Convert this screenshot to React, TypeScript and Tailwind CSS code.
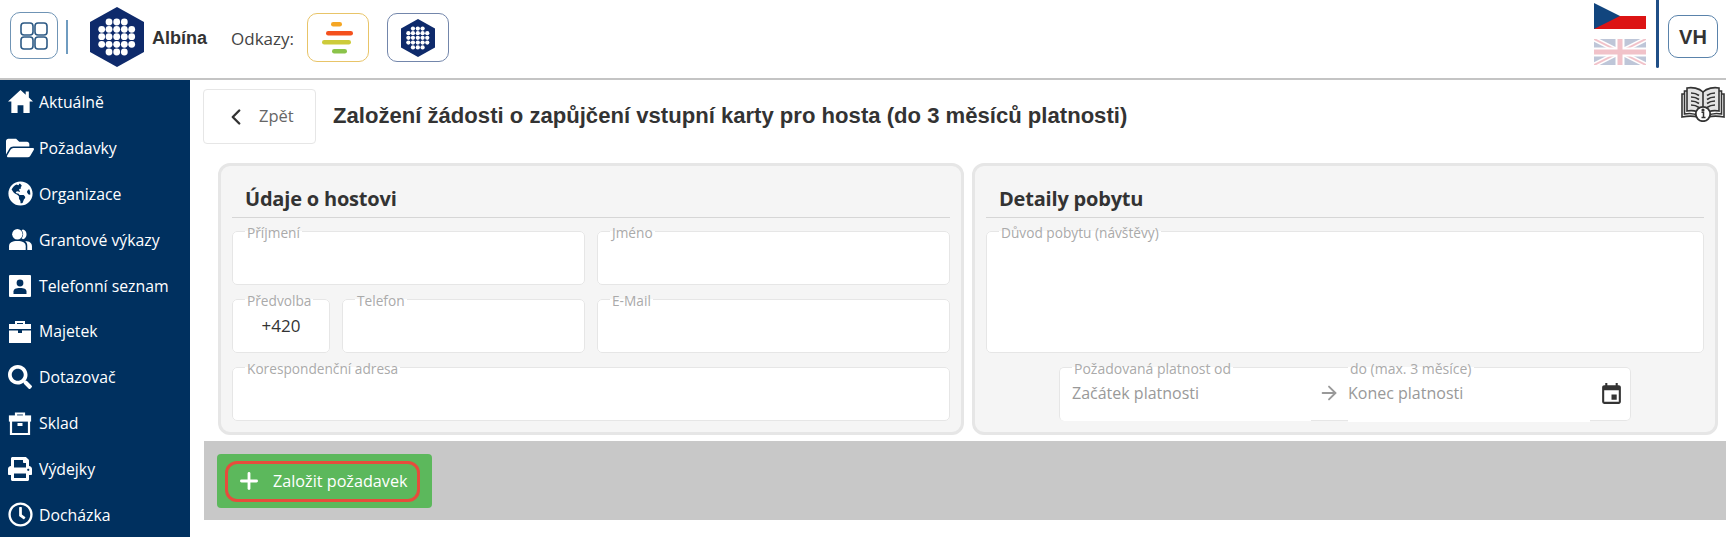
import type { ReactNode } from 'react'
import { ArrowRight, ChevronLeft, Plus } from 'lucide-react'
import { FaFolderOpen, FaGlobeAmericas, FaPrint, FaRegClock, FaSearch } from 'react-icons/fa'
import { MdEvent } from 'react-icons/md'

function LogoHex({ className }: { className: string }) {
  const rows = [
    [19, 26.7, 34.3],
    [11.7, 19, 26.7, 34.3, 41.7],
    [11.7, 19, 26.7, 34.3, 41.7],
    [11.7, 19, 26.7, 34.3, 41.7],
    [19, 26.7, 34.3],
  ]
  const ys = [15, 22.3, 29.7, 37.3, 45]
  return (
    <svg viewBox="0 0 54 60" className={className}>
      <polygon points="27,0 54,15 54,45 27,60 0,45 0,15" fill="#0e2a6b" />
      {rows.map((row, i) =>
        row.map((x) => <circle key={`${i}-${x}`} cx={x} cy={ys[i]} r="3.4" fill="#fff" />),
      )}
    </svg>
  )
}

function HomeIcon() {
  return (
    <svg viewBox="0 0 24 22" className="w-[25px] h-[23px]" fill="#fff">
      <path d="M12 0l5 4.500V1.500h3v5.700l4 3.800h-3.200v11h-6v-7.500h-5.600V22h-6V11H0z" />
    </svg>
  )
}

function UsersIcon() {
  return (
    <svg viewBox="0 0 24 24" className="w-[25px] h-[25px]" fill="#fff">
      <circle cx="9" cy="7" r="5" />
      <path d="M1 22v-3.500C1 15 4 13.500 9 13.500s8 1.500 8 5V22z" />
      <path d="M14.500 2.300a5 5 0 0 1 0 9.400c-.7-.3-1-.5-1.400-.7a6.500 6.500 0 0 0 0-8c.4-.3.8-.5 1.400-.7z" />
      <path d="M16.500 13.500c4 .2 6.500 1.800 6.500 5V22h-4.500v-4c0-1.800-.8-3.300-2-4.500z" />
    </svg>
  )
}

function ContactIcon() {
  return (
    <svg viewBox="0 0 22 22" className="w-[22px] h-[22px]">
      <rect width="22" height="22" rx="1" fill="#fff" />
      <circle cx="11" cy="8" r="3.4" fill="#00305f" />
      <path d="M4.5 19v-2.5c0-2.4 2.4-3.5 6.5-3.5s6.5 1.1 6.5 3.5V19z" fill="#00305f" />
    </svg>
  )
}

function AssetIcon() {
  return (
    <svg viewBox="0 0 24 24" className="w-[24px] h-[24px]" fill="#fff">
      <path d="M7 5V2h10v3h-2V4H9v1z" />
      <rect x="1" y="5" width="22" height="5" />
      <path d="M1 11.5h9V14h4v-2.5h9V24H1z" />
    </svg>
  )
}

function StockIcon() {
  return (
    <svg viewBox="0 0 24 24" className="w-[24px] h-[24px]" fill="none" stroke="#fff" strokeWidth="2.2">
      <path d="M8 5V2.5h8V5" />
      <rect x="2" y="5.5" width="20" height="4" fill="#fff" />
      <path d="M3 10v13h18V10" />
      <rect x="9.5" y="12" width="5" height="3" fill="#fff" strokeWidth="0" />
    </svg>
  )
}

function BookInfoIcon() {
  return (
    <svg viewBox="0 0 44 37" className="w-[44px] h-[37px]" fill="none" stroke="#333" strokeWidth="1.6">
      <path d="M22 7C18 3 11 2 6 3v23c5-1 11 0 16 4 5-4 11-5 16-4V3c-5-1-12 0-16 4z" fill="#e4e4e4" />
      <path d="M22 7v23" />
      <path d="M6 6H3.5v23c5-1 11 0 14 2M38 6h2.5v23c-5-1-11 0-14 2M3.5 9H1v23c5-1 12-1 16 0M40.500 9H43v23c-5-1-12-1-16 0" />
      <path d="M10 8c3 0 6 1 8 2.500M10 12c3 0 6 1 8 2.500M10 16c3 0 6 1 8 2.500M10 20c3 0 6 1 8 2.500M34 8c-3 0-6 1-8 2.500M34 12c-3 0-6 1-8 2.500M34 16c-3 0-6 1-8 2.500M34 20c-3 0-6 1-8 2.500" />
      <circle cx="22" cy="29" r="7.200" fill="#fff" strokeWidth="1.800" />
      <path d="M20.500 27.200h2v5M20.500 32.500h4" strokeWidth="1.500" />
      <circle cx="22" cy="25" r="0.800" fill="#333" />
    </svg>
  )
}

const menu: { label: string; icon: ReactNode }[] = [
  { label: 'Aktuálně', icon: <HomeIcon /> },
  { label: 'Požadavky', icon: <FaFolderOpen size={28} /> },
  { label: 'Organizace', icon: <FaGlobeAmericas size={25} /> },
  { label: 'Grantové výkazy', icon: <UsersIcon /> },
  { label: 'Telefonní seznam', icon: <ContactIcon /> },
  { label: 'Majetek', icon: <AssetIcon /> },
  { label: 'Dotazovač', icon: <FaSearch size={24} /> },
  { label: 'Sklad', icon: <StockIcon /> },
  { label: 'Výdejky', icon: <FaPrint size={24} /> },
  { label: 'Docházka', icon: <FaRegClock size={25} /> },
]

function Field({ label, className, children }: { label: string; className: string; children?: ReactNode }) {
  return (
    <fieldset className={`rounded-[5px] border border-[#e6e6e6] bg-white px-[12px] ${className}`}>
      <legend className="px-[2px] text-[13.7px] leading-[14px] text-[#aaaaaa]">
        <span className="relative top-[1.5px]">{label}</span>
      </legend>
      {children}
    </fieldset>
  )
}

function CardTitle({ children }: { children: ReactNode }) {
  return (
    <div className="h-[40px] border-b border-[#d6d6d6] pl-[13px] text-[20px] font-bold leading-[42px] tracking-[-0.2px] text-[#333]">
      {children}
    </div>
  )
}

export default function App() {
  return (
    <div className="h-[537px] w-[1726px] overflow-hidden bg-white font-['Open_Sans',sans-serif]">
      <header className="flex h-[80px] items-start border-b-2 border-[#c4c4c4]">
        <div className="ml-[10px] mt-[12px] flex h-[47px] w-[48px] items-center justify-center rounded-[10px] border border-[#6f94b5]">
          <svg viewBox="0 0 28 28" className="h-[28px] w-[28px]" fill="none" stroke="#2d5a85" strokeWidth="1.600">
            <rect x="1" y="1" width="12" height="12" rx="3" />
            <rect x="15" y="1" width="12" height="12" rx="3" />
            <rect x="1" y="15" width="12" height="12" rx="3" />
            <rect x="15" y="15" width="12" height="12" rx="3" />
          </svg>
        </div>
        <div className="ml-[8px] mt-[20px] h-[34px] w-[2px] bg-[#6f9cc0]" />
        <LogoHex className="ml-[22px] mt-[7px] h-[60px] w-[54px]" />
        <span className="ml-[8px] mt-[26px] font-['Liberation_Sans',sans-serif] text-[18px] font-bold leading-[24px] text-[#333]">
          Albína
        </span>
        <span className="ml-[24px] mt-[27px] text-[17px] leading-[24px] text-[#444]">Odkazy:</span>
        <div className="ml-[13px] mt-[13px] flex h-[49px] w-[62px] items-center justify-center rounded-[10px] border border-[#e8c468]">
          <svg viewBox="0 0 32 32" className="h-[32px] w-[32px]">
            <rect x="9" y="0" width="11" height="4.500" rx="2.200" fill="#f5a623" />
            <rect x="4" y="9" width="27" height="4.500" rx="2.200" fill="#f4511e" />
            <rect x="0" y="18" width="29" height="4.500" rx="2.200" fill="#cdcb3a" />
            <rect x="10" y="27" width="15" height="4.500" rx="2.200" fill="#8bc34a" />
          </svg>
        </div>
        <div className="ml-[18px] mt-[13px] flex h-[49px] w-[62px] items-center justify-center rounded-[10px] border border-[#7386ab]">
          <LogoHex className="h-[38px] w-[34px]" />
        </div>

        <div className="ml-auto mr-[10px] flex flex-col gap-[10px] pt-[3px]">
          <svg viewBox="0 0 52 26" className="h-[26px] w-[52px]">
            <rect width="52" height="13" fill="#fff" />
            <rect y="13" width="52" height="13" fill="#dc1414" />
            <polygon points="0,0 26,13 0,26" fill="#11457e" />
          </svg>
          <svg viewBox="0 0 52 26" className="h-[26px] w-[52px] opacity-25">
            <rect width="52" height="26" fill="#012169" />
            <path d="M0 0l52 26M52 0L0 26" stroke="#fff" strokeWidth="5" />
            <path d="M0 0l52 26M52 0L0 26" stroke="#c8102e" strokeWidth="2" />
            <path d="M26 0v26M0 13h52" stroke="#fff" strokeWidth="9" />
            <path d="M26 0v26M0 13h52" stroke="#c8102e" strokeWidth="5" />
          </svg>
        </div>
        <div className="h-[68px] w-[3px] rounded-b-sm bg-[#1f4e86]" />
        <div className="ml-[9px] mr-[8px] mt-[15px] flex h-[43px] w-[50px] items-center justify-center rounded-[10px] border border-[#5a83ab] font-['Liberation_Sans',sans-serif] text-[20px] font-bold text-[#333]">
          VH
        </div>
      </header>

      <div className="flex">
        <nav className="h-[457px] w-[190px] shrink-0 overflow-hidden bg-[#00305f] text-white">
          <div className="-mt-[1px]">
            {menu.map((item) => (
              <div key={item.label} className="flex h-[45.9px] items-center">
                <div className="flex w-[39px] shrink-0 justify-center pl-[1px]">{item.icon}</div>
                <span className="text-[15.8px] leading-[20px]">{item.label}</span>
              </div>
            ))}
          </div>
        </nav>

        <main className="min-w-0 flex-1">
          <div className="flex h-[64px] items-start pl-[13px] pt-[9px]">
            <div className="flex h-[55px] w-[113px] items-center rounded-[4px] border border-[#e6e6e6] pl-[19px] text-[16.5px] text-[#666]">
              <ChevronLeft size={26} strokeWidth={2.2} className="text-[#333]" />
              <span className="ml-[10px]">Zpět</span>
            </div>
            <h1 className="ml-[17px] mt-[14px] font-['Liberation_Sans',sans-serif] text-[22.1px] font-bold leading-[26px] text-[#333]">
              Založení žádosti o zapůjčení vstupní karty pro hosta (do 3 měsíců platnosti)
            </h1>
            <div className="ml-auto mr-[1px] -mt-[4px]">
              <BookInfoIcon />
            </div>
          </div>

          <div className="mt-[19px] flex gap-[8px] pl-[28px] pr-[8px]">
            <section className="h-[272px] w-[746px] rounded-[12px] border-[3px] border-[#e6e6e6] bg-[#f5f5f5] px-[11px] pt-[12px]">
              <CardTitle>Údaje o hostovi</CardTitle>
              <div className="mt-[6px] grid grid-cols-2 gap-x-[12px] gap-y-[7px]">
                <Field label="Příjmení" className="h-[61px]" />
                <Field label="Jméno" className="h-[61px]" />
                <div className="flex gap-[12px]">
                  <Field label="Předvolba" className="h-[61px] w-[98px] shrink-0">
                    <div className="pt-[6px] text-center text-[17px] leading-[28px] text-[#333]">+420</div>
                  </Field>
                  <Field label="Telefon" className="h-[61px] min-w-0 flex-1" />
                </div>
                <Field label="E-Mail" className="h-[61px]" />
                <Field label="Korespondenční adresa" className="col-span-2 h-[61px]" />
              </div>
            </section>

            <section className="h-[272px] w-[746px] rounded-[12px] border-[3px] border-[#e6e6e6] bg-[#f5f5f5] px-[11px] pt-[12px]">
              <CardTitle>Detaily pobytu</CardTitle>
              <div className="mt-[6px]">
                <Field label="Důvod pobytu (návštěvy)" className="h-[129px]" />
                <div className="ml-[73px] mt-[7px] flex h-[61px] w-[572px]">
                  <fieldset className="w-[252px] rounded-l-[5px] border border-b-0 border-r-0 border-[#e6e6e6] bg-white pl-[12px]">
                    <legend className="px-[2px] text-[14px] leading-[14px] text-[#aaaaaa]">
                      <span className="relative top-[1.5px]">Požadovaná platnost od</span>
                    </legend>
                    <div className="pt-[7px] text-[16px] leading-[24px] text-[#999]">Začátek platnosti</div>
                  </fieldset>
                  <div className="mt-[7px] flex h-[54px] w-[35px] shrink-0 items-start justify-center border-y border-[#e6e6e6] bg-white pl-[1px] pt-[14px] text-[#999]">
                    <ArrowRight size={22} />
                  </div>
                  <fieldset className="relative min-w-0 flex-1 rounded-r-[5px] border border-l-0 border-[#e6e6e6] bg-white pl-[2px]">
                    <legend className="px-[2px] text-[14px] leading-[14px] text-[#aaaaaa]">
                      <span className="relative top-[1.5px]">do (max. 3 měsíce)</span>
                    </legend>
                    <div className="h-[48px] w-[242px] bg-white pt-[7px] text-[16px] leading-[24px] text-[#999]">Konec platnosti</div>
                    <MdEvent size={25} className="absolute right-[6px] top-[8px] text-[#333]" />
                  </fieldset>
                </div>
              </div>
            </section>
          </div>

          <div className="ml-[14px] mt-[6px] h-[79px] bg-[#c8c8c8] pl-[13px] pt-[13px]">
            <div className="flex h-[54px] w-[215px] items-center rounded-[4px] bg-[#5cb85c] pl-[8px]">
              <div className="flex h-[41px] w-[195px] items-center rounded-[12px] border-[3px] border-[#e74c3c] pl-[8px] text-white">
                <Plus size={26} strokeWidth={2.6} />
                <span className="ml-[11px] text-[16.2px] leading-[20px]">Založit požadavek</span>
              </div>
            </div>
          </div>
        </main>
      </div>
    </div>
  )
}
